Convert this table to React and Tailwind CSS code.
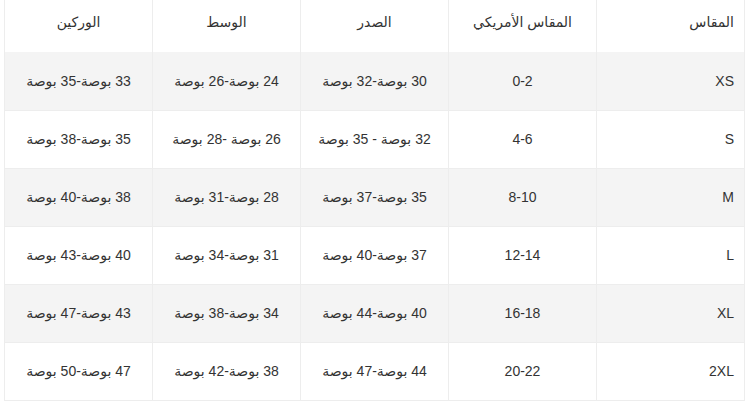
import React from "react";

const headers = ["المقاس", "المقاس الأمريكي", "الصدر", "الوسط", "الوركين"];

const rows = [
  ["XS", "0-2", "30 بوصة-32 بوصة", "24 بوصة-26 بوصة", "33 بوصة-35 بوصة"],
  ["S", "4-6", "32 بوصة - 35 بوصة", "26 بوصة -28 بوصة", "35 بوصة-38 بوصة"],
  ["M", "8-10", "35 بوصة-37 بوصة", "28 بوصة-31 بوصة", "38 بوصة-40 بوصة"],
  ["L", "12-14", "37 بوصة-40 بوصة", "31 بوصة-34 بوصة", "40 بوصة-43 بوصة"],
  ["XL", "16-18", "40 بوصة-44 بوصة", "34 بوصة-38 بوصة", "43 بوصة-47 بوصة"],
  ["2XL", "20-22", "44 بوصة-47 بوصة", "38 بوصة-42 بوصة", "47 بوصة-50 بوصة"],
];

const SizeTable = () => {
  return (
    <div className="w-[750px] h-[404px] bg-white overflow-hidden pl-[4px] pr-[6px]">
      <table
        dir="rtl"
        className="w-[740px] table-fixed border-collapse text-[14px] text-[#333] font-['Liberation_Sans','DejaVu_Sans',sans-serif]"
      >
        <thead>
          <tr className="h-[52px] bg-white">
            {headers.map((h, i) => (
              <th
                key={h}
                className={`w-[148px] font-normal align-top pt-[12px] border-x border-[#ededed] leading-[20px] ${
                  i === 0 ? "text-right pr-[10px]" : "text-center"
                }`}
              >
                {h}
              </th>
            ))}
          </tr>
        </thead>
        <tbody>
          {rows.map((row, r) => (
            <tr
              key={row[0]}
              className={`h-[58px] ${r % 2 === 0 ? "bg-[#f4f4f4]" : "bg-white"}`}
            >
              {row.map((cell, i) => (
                <td
                  key={i}
                  className={`border-x border-b border-[#ededed] leading-[20px] ${
                    i === 0 ? "text-right pr-[10px]" : "text-center"
                  }`}
                >
                  {cell}
                </td>
              ))}
            </tr>
          ))}
        </tbody>
      </table>
    </div>
  );
}

export default function App() {
  return <SizeTable />;
}
